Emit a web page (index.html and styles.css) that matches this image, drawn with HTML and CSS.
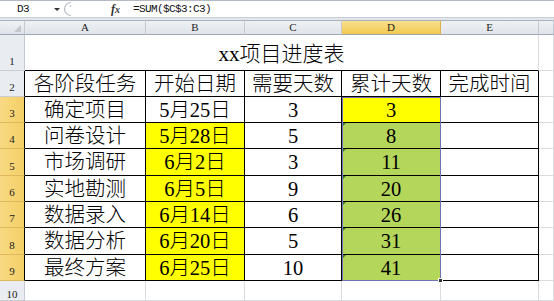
FILE: index.html
```html
<!DOCTYPE html>
<html lang="zh">
<head>
<meta charset="utf-8">
<title>xx项目进度表</title>
<link rel="stylesheet" href="styles.css">
</head>
<body>
<div class="app">
  <div class="fbar">
    <div class="namebox"><span class="nb-text">D3</span><span class="nb-arrow"></span></div>
    <svg class="grip" width="12" height="16" viewBox="0 0 12 16"><path d="M8 1.5 A6.5 6.5 0 0 0 8 14.5" fill="none" stroke="#b7bdc5" stroke-width="1.2"/><circle cx="7.5" cy="5" r="1" fill="#c9ced4"/></svg>
    <span class="fx">f<span class="fx-x">x</span></span>
    <span class="formula">=SUM($C$3:C3)</span>
  </div>
  <div class="fsep"></div>
  <div class="sheet">
    <!-- column header row -->
    <div class="hd corner"><span class="corner-tri"></span></div>
    <div class="hd">A</div>
    <div class="hd">B</div>
    <div class="hd">C</div>
    <div class="hd hd-sel">D</div>
    <div class="hd">E</div>
    <div class="hd"></div>

    <!-- row 1 -->
    <div class="rh">1</div>
    <div class="c title">xx项目进度表</div>
    <div class="c"></div>

    <!-- row 2 -->
    <div class="rh rh-t">2</div>
    <div class="c t">各阶段任务</div>
    <div class="c t">开始日期</div>
    <div class="c t">需要天数</div>
    <div class="c t">累计天数</div>
    <div class="c t">完成时间</div>
    <div class="c"></div>

    <!-- row 3 -->
    <div class="rh rh-t rh-sel">3</div>
    <div class="c t">确定项目</div>
    <div class="c t">5月25日</div>
    <div class="c t">3</div>
    <div class="c t y">3</div>
    <div class="c t"></div>
    <div class="c"></div>

    <!-- row 4 -->
    <div class="rh rh-t rh-sel">4</div>
    <div class="c t">问卷设计</div>
    <div class="c t y">5月28日</div>
    <div class="c t">5</div>
    <div class="c t g err">8</div>
    <div class="c t"></div>
    <div class="c"></div>

    <!-- row 5 -->
    <div class="rh rh-t rh-sel">5</div>
    <div class="c t">市场调研</div>
    <div class="c t y">6月2日</div>
    <div class="c t">3</div>
    <div class="c t g err">11</div>
    <div class="c t"></div>
    <div class="c"></div>

    <!-- row 6 -->
    <div class="rh rh-t rh-sel">6</div>
    <div class="c t">实地勘测</div>
    <div class="c t y">6月5日</div>
    <div class="c t">9</div>
    <div class="c t g err">20</div>
    <div class="c t"></div>
    <div class="c"></div>

    <!-- row 7 -->
    <div class="rh rh-t rh-sel">7</div>
    <div class="c t">数据录入</div>
    <div class="c t y">6月14日</div>
    <div class="c t">6</div>
    <div class="c t g err">26</div>
    <div class="c t"></div>
    <div class="c"></div>

    <!-- row 8 -->
    <div class="rh rh-t rh-sel">8</div>
    <div class="c t">数据分析</div>
    <div class="c t y">6月20日</div>
    <div class="c t">5</div>
    <div class="c t g err">31</div>
    <div class="c t"></div>
    <div class="c"></div>

    <!-- row 9 -->
    <div class="rh rh-t rh-sel">9</div>
    <div class="c t">最终方案</div>
    <div class="c t y">6月25日</div>
    <div class="c t">10</div>
    <div class="c t g err">41</div>
    <div class="c t"></div>
    <div class="c"></div>

    <!-- row 10 -->
    <div class="rh rh-last">10</div>
    <div class="c"></div>
    <div class="c"></div>
    <div class="c"></div>
    <div class="c"></div>
    <div class="c"></div>
    <div class="c"></div>

    <div class="selection"><span class="fill-handle"></span></div>
  </div>
</div>
</body>
</html>
```
FILE: styles.css
```css
* { box-sizing: border-box; }
html, body { margin: 0; padding: 0; }
body {
  width: 554px;
  height: 301px;
  overflow: hidden;
  background: #ffffff;
  font-family: "Liberation Serif", "Noto Sans CJK SC Light", "Noto Sans CJK SC DemiLight", "Noto Sans CJK SC", serif;
}
.app { width: 554px; height: 301px; overflow: hidden; }

/* formula bar */
.fbar {
  height: 18px;
  border-top: 1px solid #b3bac4;
  border-bottom: 1px solid #c9ced6;
  background: #ffffff;
  display: flex;
  align-items: center;
}
.namebox {
  width: 62px;
  height: 100%;
  display: flex;
  align-items: center;
  padding-left: 17px;
}
.nb-text {
  font-family: "Liberation Mono", monospace;
  font-size: 11px;
  letter-spacing: -0.5px;
  color: #111;
}
.nb-arrow {
  margin-left: 25px;
  width: 0;
  height: 0;
  border-left: 3px solid transparent;
  border-right: 3px solid transparent;
  border-top: 3px solid #333;
}
.grip { margin-left: 1px; }
.fx {
  margin-left: 36px;
  font-family: "Liberation Serif", serif;
  font-style: italic;
  font-weight: bold;
  font-size: 12px;
  color: #333;
  width: 20px;
}
.fx-x { font-size: 10px; }
.formula {
  margin-left: 2px;
  font-family: "Liberation Mono", monospace;
  font-size: 11px;
  letter-spacing: -0.6px;
  color: #111;
}
.fsep { height: 2px; background: #e3e6eb; }

/* sheet grid */
.sheet {
  position: relative;
  display: grid;
  grid-template-columns: 25px 121px 99px 97px 99px 98px 15px;
  grid-template-rows: 15px 36px 26px 26px 26px 27px 26px 26px 27px 26px 20px;
}
.hd {
  background: linear-gradient(#eef1f4, #e0e4ea);
  border-top: 1px solid #a9b2bd;
  border-right: 1px solid #c4cad2;
  border-bottom: 1px solid #9ea8b4;
  font-size: 11px;
  color: #222;
  display: flex;
  align-items: center;
  justify-content: center;
  line-height: 1;
}
.hd-sel {
  background: linear-gradient(#f9e08e, #f2c94f);
  border-right-color: #dcb24e;
}
.corner { position: relative; }
.corner-tri {
  position: absolute;
  right: 3px;
  bottom: 2px;
  width: 0;
  height: 0;
  border-left: 7px solid transparent;
  border-bottom: 7px solid #c3c8cf;
}
.rh {
  background: #e9ecf0;
  border-right: 1px solid #c4cad2;
  border-bottom: 1px solid #c8cdd4;
  font-size: 11px;
  color: #222;
  display: flex;
  align-items: flex-end;
  justify-content: center;
  padding-bottom: 3px;
  line-height: 1;
}
.rh-t { border-right-color: #000; }
.rh-sel {
  background: linear-gradient(90deg, #f8da83, #f4cf66);
  border-bottom-color: #e0b85c;
}
.rh-last { align-items: flex-start; padding-top: 8px; padding-bottom: 0; }

.c {
  border-right: 1px solid #dadcdd;
  border-bottom: 1px solid #dadcdd;
  display: flex;
  align-items: center;
  justify-content: center;
  font-size: 20.5px;
  font-weight: 300;
  line-height: 1;
  padding-top: 1px;
  color: #000;
  white-space: nowrap;
  position: relative;
}
.title {
  grid-column: span 5;
  border-bottom-color: #000;
  font-size: 21px;
  padding-top: 3px;
}
.t { border-right-color: #000; border-bottom-color: #000; }
.y { background: #ffff00; }
.g { background: #b4d65a; }
.err::before {
  content: "";
  position: absolute;
  left: 0;
  top: 0;
  width: 0;
  height: 0;
  border-top: 4px solid #3a7d2a;
  border-right: 4px solid transparent;
}

/* selection overlay */
.selection {
  position: absolute;
  left: 342px;
  top: 77px;
  width: 99px;
  height: 184px;
  border: 1px solid #7072b4;
  pointer-events: none;
}
.fill-handle {
  position: absolute;
  right: -3px;
  bottom: -3px;
  width: 5px;
  height: 5px;
  background: #333;
  border: 1px solid #fff;
}
```
